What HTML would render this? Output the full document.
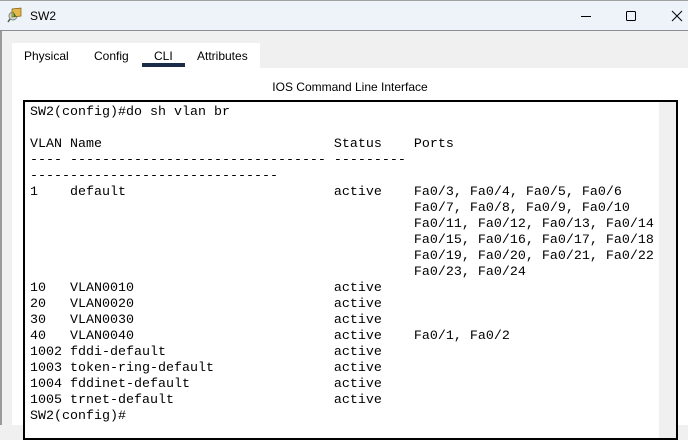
<!DOCTYPE html>
<html><head><style>
*{margin:0;padding:0;box-sizing:border-box}
body{width:688px;height:425px;overflow:hidden;background:#f0f0f0;font-family:"Liberation Sans",sans-serif;position:relative}
.title{position:absolute;left:0;top:0;width:688px;height:31px;background:#eef3fa;border-bottom:1px solid #8a8d91;border-top:1px solid #a0a0a0}
.title .t{position:absolute;left:30px;top:8px;font-size:12px;color:#000}
.leftb{position:absolute;left:0;top:31px;width:2px;height:394px;background:#9a9a9a}
.tabs{position:absolute;left:12px;top:43px;width:248px;height:25px;background:#fff}
.tab{position:absolute;top:6px;font-size:12px;color:#000}
.ul{position:absolute;left:142px;top:63px;width:43px;height:4px;background:#1b2b48}
.panel{position:absolute;left:12px;top:68px;width:676px;height:357px;background:#fff}
.hdr{position:absolute;left:0;width:676px;top:12px;text-align:center;font-size:12px;color:#000}
.term{position:absolute;left:23px;top:100px;width:655px;height:340px;border:2px solid #000;background:#fff}
.sb{position:absolute;right:0;top:0;width:17px;height:100%;background:#f0f0f0}
pre{position:absolute;left:5px;top:3px;font-family:"Liberation Mono",monospace;font-size:13.33px;line-height:16px;color:#000}
</style></head><body>
<div class="title">
<svg style="position:absolute;left:7px;top:6px" width="16" height="17" viewBox="0 0 16 17"><circle cx="6" cy="9" r="4" fill="#cfd8d0" stroke="#7a8a7a"/><line x1="3" y1="12" x2="1" y2="15" stroke="#555" stroke-width="1.5"/><path d="M5 2 L14 1 L14 9 L5 10Z" fill="#e8b74a" stroke="#7a5a10" stroke-width=".7"/><path d="M6 4 L9 9 L7 10Z" fill="#1f7a2a"/></svg>
<span class="t">SW2</span>
<svg style="position:absolute;left:580px;top:8px" width="12" height="14"><line x1="1" y1="7.5" x2="11" y2="7.5" stroke="#000"/></svg>
<svg style="position:absolute;left:625px;top:9px" width="12" height="12"><rect x="1.5" y="1.5" width="9" height="9" rx="1" fill="none" stroke="#000"/></svg>
<svg style="position:absolute;left:671px;top:9px" width="12" height="12"><path d="M1 1L11 11M11 1L1 11" stroke="#000"/></svg>
</div>
<div class="leftb"></div>
<div class="tabs">
<span class="tab" style="left:12px">Physical</span>
<span class="tab" style="left:82px">Config</span>
<span class="tab" style="left:142px">CLI</span>
<span class="tab" style="left:185px">Attributes</span>
</div>
<div class="ul"></div>
<div class="panel"><div class="hdr">IOS Command Line Interface</div></div>
<div class="term"><div class="sb"></div>
<pre>SW2(config)#do sh vlan br

VLAN Name                             Status    Ports
---- -------------------------------- ---------
-------------------------------
1    default                          active    Fa0/3, Fa0/4, Fa0/5, Fa0/6
                                                Fa0/7, Fa0/8, Fa0/9, Fa0/10
                                                Fa0/11, Fa0/12, Fa0/13, Fa0/14
                                                Fa0/15, Fa0/16, Fa0/17, Fa0/18
                                                Fa0/19, Fa0/20, Fa0/21, Fa0/22
                                                Fa0/23, Fa0/24
10   VLAN0010                         active
20   VLAN0020                         active
30   VLAN0030                         active
40   VLAN0040                         active    Fa0/1, Fa0/2
1002 fddi-default                     active
1003 token-ring-default               active
1004 fddinet-default                  active
1005 trnet-default                    active
SW2(config)#</pre>
</div>
</body></html>
